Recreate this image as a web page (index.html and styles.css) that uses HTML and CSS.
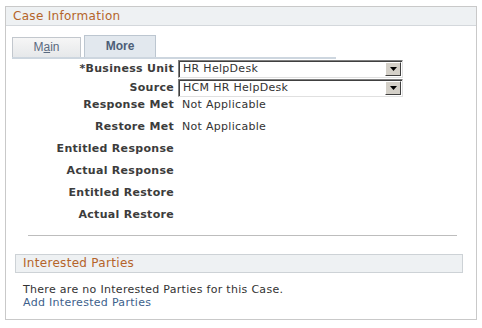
FILE: index.html
```html
<!DOCTYPE html>
<html lang="en">
<head>
  <meta charset="UTF-8">
  <title>Case Information</title>
  <link rel="stylesheet" href="styles.css">
</head>
<body>
  <div class="case-box">
    <div class="box-header">Case Information</div>

    <div class="tabs">
      <div class="tab">M<u>a</u>in</div>
      <div class="tab active">More</div>
      <div class="tab-line"></div>
    </div>

    <div class="fields">
      <div class="label">*Business Unit</div>
      <div class="dropdown">
        <span class="dd-text">HR HelpDesk</span>
        <span class="dd-btn"><svg width="7" height="4" viewBox="0 0 7 4"><path d="M0 0h7L3.5 4z" fill="#000"/></svg></span>
      </div>

      <div class="label">Source</div>
      <div class="dropdown">
        <span class="dd-text">HCM HR HelpDesk</span>
        <span class="dd-btn"><svg width="7" height="4" viewBox="0 0 7 4"><path d="M0 0h7L3.5 4z" fill="#000"/></svg></span>
      </div>

      <div class="label text-row">Response Met</div>
      <div class="value text-row">Not Applicable</div>

      <div class="label text-row">Restore Met</div>
      <div class="value text-row">Not Applicable</div>

      <div class="label text-row">Entitled Response</div>
      <div class="value text-row"></div>

      <div class="label text-row">Actual Response</div>
      <div class="value text-row"></div>

      <div class="label text-row">Entitled Restore</div>
      <div class="value text-row"></div>

      <div class="label text-row">Actual Restore</div>
      <div class="value text-row"></div>
    </div>

    <hr class="divider">

    <div class="sub-header">Interested Parties</div>
    <div class="parties">
      <p>There are no Interested Parties for this Case.</p>
      <a href="#">Add Interested Parties</a>
    </div>
  </div>
</body>
</html>
```

FILE: styles.css
```css
body {
  margin: 0;
  background: #fff;
  font-family: "DejaVu Sans", Verdana, sans-serif;
  font-size: 11px;
  letter-spacing: 0.3px;
  color: #333;
}
.case-box {
  margin: 6px 5px 0;
  width: 470px;
  height: 312px;
  border: 1px solid #c9c9c9;
}
.box-header {
  height: 18px;
  line-height: 18px;
  padding-left: 7px;
  background: #eef1f3;
  border-bottom: 1px solid #d4d8dc;
  color: #b5642a;
  font-size: 12px;
}
.tabs {
  display: flex;
  align-items: flex-end;
  margin: 8px 0 0 6px;
  position: relative;
  width: 324px;
  height: 23px;
}
.tab {
  font-family: "Liberation Sans", Arial, sans-serif;
  font-size: 12px;
  letter-spacing: 0;
  text-align: center;
  height: 19px;
  line-height: 19px;
  width: 67px;
  margin-right: 3px;
  border: 1px solid #c2c7cd;
  border-bottom: none;
  background: linear-gradient(#f6f6f6, #e6e8ea);
  color: #5a6a80;
}
.tab.active {
  height: 21px;
  line-height: 21px;
  width: 70px;
  font-weight: bold;
  background: #e2e8ee;
  border-color: #bcc6d0;
  color: #4c5e78;
}
.tab-line {
  position: absolute;
  left: 0;
  right: 0;
  bottom: -2px;
  height: 2px;
  background: #cdd6df;
}
.fields {
  display: grid;
  grid-template-columns: 168px 225px;
  column-gap: 4px;
  margin-top: 3px;
}
.label {
  font-weight: bold;
  text-align: right;
  line-height: 18px;
  color: #3c3c3c;
}
.value {
  padding-left: 4px;
}
.dropdown {
  display: flex;
  align-items: center;
  height: 16px;
  margin-bottom: 1px;
  border: 1px solid #e0e0e0;
  border-top-color: #808080;
  border-left-color: #808080;
  box-shadow: inset 1px 1px #404040;
  background: #fff;
}
.dd-text {
  flex: 1;
  padding-left: 4px;
  line-height: 16px;
}
.dd-btn {
  display: flex;
  align-items: center;
  justify-content: center;
  width: 14px;
  height: 12px;
  margin-right: 1px;
  background: #d4d0c8;
  border: 1px solid #404040;
  border-top-color: #fff;
  border-left-color: #fff;
}
.text-row {
  line-height: 14px;
  margin-bottom: 8px;
}
.divider {
  margin: 5px 19px 0 22px;
  border: none;
  border-top: 1px solid #bdbdbd;
}
.sub-header {
  margin: 18px 13px 0 9px;
  height: 17px;
  line-height: 17px;
  padding-left: 7px;
  background: #eef1f3;
  border: 1px solid #cdd2d6;
  color: #b5642a;
  font-size: 12px;
}
.parties {
  padding: 10px 0 0 17px;
  line-height: 13px;
}
.parties p {
  margin: 0;
}
.parties a {
  color: #3d5f8c;
  text-decoration: none;
}
```
